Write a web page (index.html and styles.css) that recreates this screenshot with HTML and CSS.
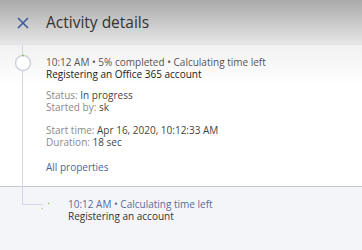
FILE: index.html
```html
<!DOCTYPE html>
<html>
<head>
	<title>Activity details</title>
	<meta name="viewport" content="width=device-width">
	<link rel="stylesheet" href="styles.css">
</head>
<body>
	<header class="panel-header">
		<a class="close-button" href="#">
			<svg width="12" height="12" viewBox="0 0 12 12">
				<path d="M1 1 L11 11 M11 1 L1 11" stroke="#3d5a9a" stroke-width="1.6" fill="none"/>
			</svg>
		</a>
		<h1>Activity details</h1>
	</header>

	<div class="timeline">
		<div class="activity activity-main">
			<svg class="marker" width="18" height="18" viewBox="0 0 18 18">
				<circle cx="9" cy="9" r="7.5" stroke="#cdd1df" stroke-width="1.5" fill="#fff"/>
				<path d="M8 1.5 A7.5 7.5 0 0 1 10 1.5" stroke="#8cc63f" stroke-width="1.6" fill="none"/>
			</svg>
			<div class="activity-line">10:12 AM • 5% completed • Calculating time left</div>
			<div class="activity-name">Registering an Office 365 account</div>

			<div class="props">
				<div><span class="prop-label">Status:</span> In progress</div>
				<div><span class="prop-label">Started by:</span> sk</div>
			</div>
			<div class="props">
				<div><span class="prop-label">Start time:</span> Apr 16, 2020, 10:12:33 AM</div>
				<div><span class="prop-label">Duration:</span> 18 sec</div>
			</div>
			<a class="all-props" href="#">All properties</a>
		</div>

		<div class="activity activity-sub">
			<svg class="spinner" width="12" height="12" viewBox="0 0 12 12">
				<path d="M7 1.2 A4.8 4.8 0 0 1 8.2 1.7" stroke="#8cc63f" stroke-width="1.2" fill="none"/>
				<path d="M1.4 7.2 A4.8 4.8 0 0 1 1.3 6.2" stroke="#8cc63f" stroke-width="1.2" fill="none"/>
			</svg>
			<div class="activity-line sub-line">10:12 AM • Calculating time left</div>
			<div class="activity-name sub-name">Registering an account</div>
		</div>
	</div>
</body>
</html>
```

FILE: styles.css
```css
/* Основные стили */
body {
	margin: 0;
	padding: 0;
	font-family: "Open Sans", Arial, sans-serif;
	background-color: #f4f5f9;
	color: #333;
	height: 250px;
	overflow: hidden;
}

/* Заголовок панели */
.panel-header {
	height: 45px;
	display: flex;
	align-items: center;
	padding-left: 17px;
	box-sizing: border-box;
	background: linear-gradient(#aaaaaa, #e6e6e6);
	border-bottom: 1px solid #e2e3ea;
}

.close-button {
	display: flex;
	width: 12px;
	height: 12px;
	margin-top: 2px;
}

.panel-header h1 {
	margin: 0 0 0 17px;
	font-size: 15.5px;
	font-weight: normal;
	color: #333;
	line-height: 20px;
}

/* Таймлайн */
.activity {
	position: relative;
	font-size: 10px;
	line-height: 12px;
}

.activity-main {
	padding: 11px 0 13px 46px;
	background: linear-gradient(#f1f1f1, #ffffff 40px);
	border-bottom: 1px solid #c6c7d2;
}

/* вертикальная линия */
.activity-main::before {
	content: "";
	position: absolute;
	left: 22px;
	top: 0;
	bottom: -1px;
	width: 1px;
	background-color: #d3d6e2;
}

.marker {
	position: absolute;
	left: 14px;
	top: 9px;
}

.activity-line {
	color: #555;
}

.activity-name {
	color: #222;
}

.props {
	margin-top: 9px;
	color: #444;
}

.props + .props {
	margin-top: 11px;
}

.prop-label {
	color: #8a8a8a;
}

.all-props {
	display: block;
	margin-top: 13px;
	color: #50639b;
	text-decoration: none;
}

/* Вложенная активность */
.activity-sub {
	padding: 11px 0 0 68px;
}

.activity-sub::before {
	content: "";
	position: absolute;
	left: 22px;
	top: 0;
	width: 20px;
	height: 17px;
	border-left: 1px solid #d3d6e2;
	border-bottom: 1px solid #d3d6e2;
}

.spinner {
	position: absolute;
	left: 41px;
	top: 15px;
}

.sub-line {
	color: #5b6c96;
}

.sub-name {
	color: #333;
}
```
